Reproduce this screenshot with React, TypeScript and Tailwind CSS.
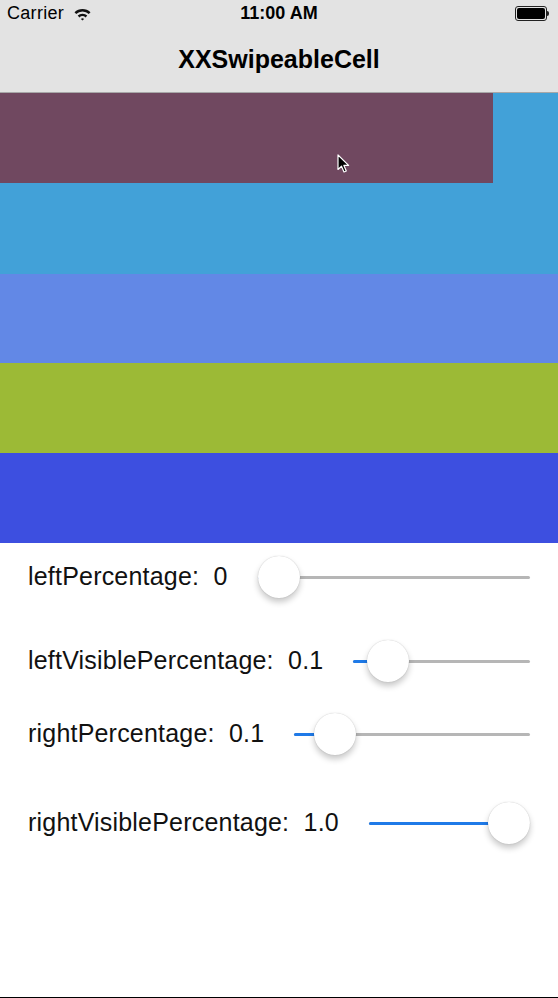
import React from 'react';

interface SliderRow {
  label: string;
  value: number;
  gapTop: string;
}

const rows: SliderRow[] = [
  { label: 'leftPercentage:  0', value: 0, gapTop: 'mt-[13px]' },
  { label: 'leftVisiblePercentage:  0.1', value: 0.1, gapTop: 'mt-[42px]' },
  { label: 'rightPercentage:  0.1', value: 0.1, gapTop: 'mt-[31px]' },
  { label: 'rightVisiblePercentage:  1.0', value: 1, gapTop: 'mt-[47px]' },
];

function Slider({ value }: { value: number }) {
  const thumbLeft = `calc(${value} * (100% - 42px))`;
  const fillWidth = `calc(${value} * (100% - 42px) + 21px)`;
  return (
    <div className="relative h-[42px] flex-1">
      <div className="absolute left-0 right-0 top-[20px] h-[3px] rounded-full bg-[#b6b6b6]" />
      <div className="absolute left-0 top-[20px] h-[3px] rounded-full bg-[#1f7ae8]" style={{ width: fillWidth }} />
      <div
        className="absolute top-0 h-[42px] w-[42px] rounded-full bg-white shadow-[0_4px_6px_rgba(0,0,0,0.22),0_0_1px_rgba(0,0,0,0.25)]"
        style={{ left: thumbLeft }}
      />
    </div>
  );
}

function Wifi() {
  return (
    <svg width="19" height="14" viewBox="0 0 18 14" className="ml-[9px]">
      <path d="M1 5.2 A11.5 11.5 0 0 1 17 5.2 L15.3 7 A9 9 0 0 0 2.7 7 Z" fill="#111" />
      <path d="M4.2 8.6 A7 7 0 0 1 13.8 8.6 L12.1 10.4 A4.6 4.6 0 0 0 5.9 10.4 Z" fill="#111" />
      <path d="M7.4 11.9 A2.4 2.4 0 0 1 10.6 11.9 L9 13.6 Z" fill="#111" />
    </svg>
  );
}

function Battery() {
  return (
    <div className="flex items-center">
      <div className="h-[15px] w-[32px] rounded-[3px] border border-[#222] p-[1px]">
        <div className="h-full w-full rounded-[2px] bg-black" />
      </div>
      <div className="h-[5px] w-[2px] rounded-r-sm bg-[#222]" />
    </div>
  );
}

export default function App() {
  return (
    <div className="relative flex h-[998px] w-[558px] flex-col overflow-hidden bg-white font-['Liberation_Sans',Arial,sans-serif] text-black">
      {/* Status + navigation bar */}
      <div className="border-b border-[#a8a8a8] bg-[#e3e3e3]">
        <div className="relative flex h-[27px] items-center px-[7px] text-[18px]">
          <span className="tracking-[0.3px]">Carrier</span>
          <Wifi />
          <span className="absolute left-1/2 -translate-x-1/2 font-semibold">11:00 AM</span>
          <div className="ml-auto mr-[2px]">
            <Battery />
          </div>
        </div>
        <div className="flex h-[65px] items-center justify-center text-[25px] font-semibold">XXSwipeableCell</div>
      </div>

      {/* Cells */}
      <div className="flex h-[90px] bg-[#42a1d8]">
        <div className="h-full w-[493px] bg-[#704860]" />
      </div>
      <div className="h-[91px] bg-[#42a1d8]" />
      <div className="h-[89px] bg-[#6288e6]" />
      <div className="h-[90px] bg-[#9cba36]" />
      <div className="h-[90px] bg-[#3d4fe0]" />

      {/* Controls */}
      <div className="flex flex-1 flex-col">
        {rows.map((row) => (
          <div key={row.label} className={`flex items-center pl-[28px] pr-[28px] ${row.gapTop}`}>
            <span className="whitespace-pre text-[25px] tracking-[0.2px] text-[#111]">{row.label}</span>
            <div className="ml-[30px] flex flex-1">
              <Slider value={row.value} />
            </div>
          </div>
        ))}
      </div>
      <div className="h-[1px] bg-black" />

      {/* Mouse cursor from the recording */}
      <svg className="absolute left-[337px] top-[154px]" width="13" height="19" viewBox="0 0 13 19">
        <path d="M1 1 L1 15.5 L4.5 12.2 L7 18 L9.3 17 L6.9 11.4 L11.6 11.4 Z" fill="#000" stroke="#fff" strokeWidth="1.2" strokeLinejoin="round" />
      </svg>
    </div>
  );
}
